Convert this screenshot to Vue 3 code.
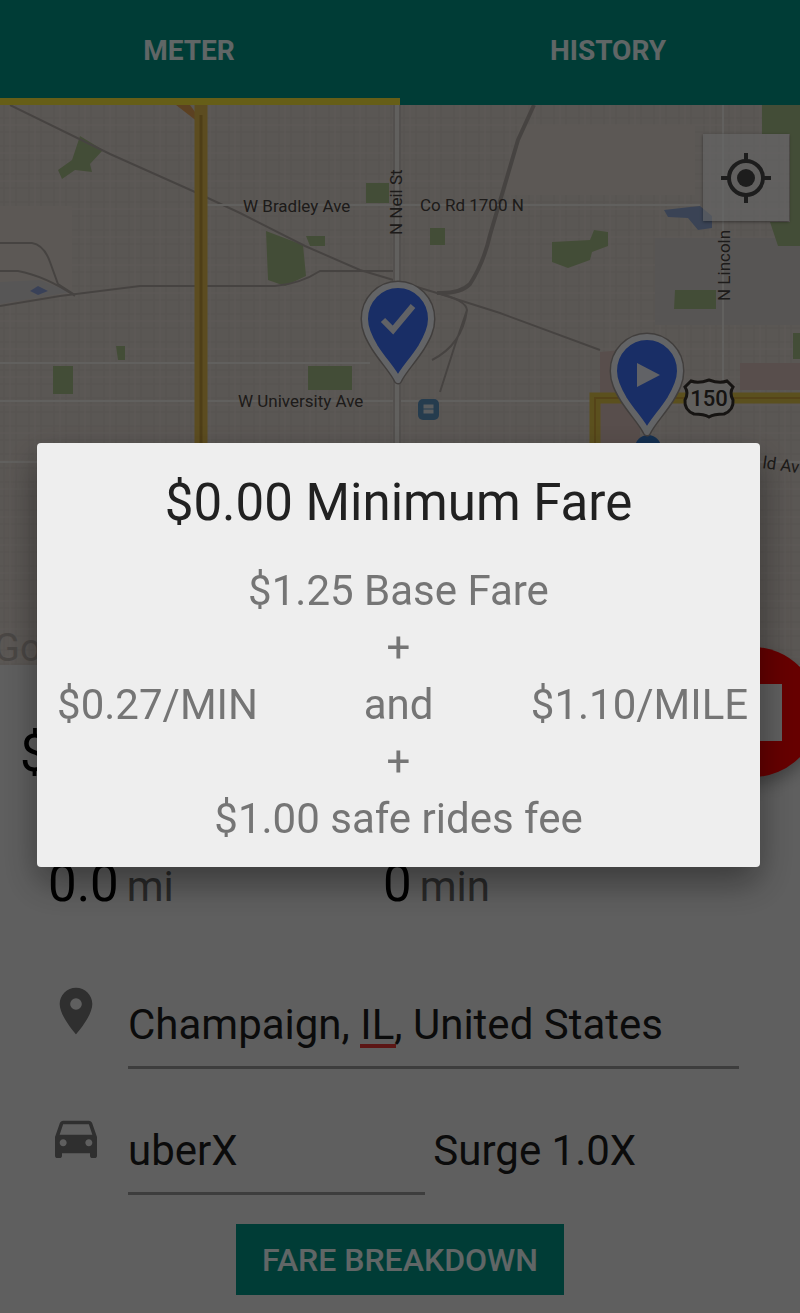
<template>
  <div class="page">
    <header class="tabs" role="tablist">
      <button
        v-for="tab in tabs"
        :key="tab"
        class="tab"
        :class="{ active: tab === activeTab }"
        role="tab"
        :aria-selected="tab === activeTab"
        @click="activeTab = tab"
      >{{ tab }}</button>
    </header>

    <section class="map">
      <svg class="map-canvas" viewBox="0 105 800 560" preserveAspectRatio="xMidYMid slice">
        <defs>
          <pattern id="blocks" width="25" height="28" patternUnits="userSpaceOnUse">
            <path d="M4 0V28M16 0V28M0 6H25M0 20H25" stroke="#d8d0c9" stroke-width="1" fill="none" />
            <path d="M10 0V28M0 13H25" stroke="#e8e0d9" stroke-width="1" fill="none" />
          </pattern>
        </defs>
        <rect y="105" width="800" height="560" fill="#e2d9d2" />
        <rect y="105" width="800" height="560" fill="url(#blocks)" />

        <!-- 空地 -->
        <path d="M0 206H72V290H0Z M520 125H695V195H505Z" fill="#e5ddd4" />
        <path d="M655 238H800V325H655Z" fill="#d9d5d2" />
        <path d="M740 363H800V390H740Z M600 352L622 350V400H600Z M600 402H640V443H600Z" fill="#dcc3bd" />
        <path d="M0 282L40 280L70 292L0 304Z" fill="#dad6d8" />

        <!-- 公园 -->
        <g fill="#a9c08a">
          <path d="M80 136L103 150L90 164L92 172L75 170L62 179L58 170L72 160Z" />
          <path d="M266 231L303 245L306 276L285 286L268 280Z" />
          <path d="M308 366H352V390H308Z M53 366H73V394H53Z" />
          <path d="M552 242L590 240L594 230L608 232V246L592 252L590 260L568 268L552 262Z" />
          <path d="M675 290H716V309H674Z M366 183H389V203H366Z M430 228H445V245H430Z" />
          <path d="M762 105H800V246H778L770 222H790V134H762Z M793 333H800V359H793Z" />
          <path d="M306 236H325V246H310Z M116 346H125V360H118Z" />
        </g>
        <path d="M664 210L690 207L700 206L712 216V228L698 230L688 218L668 217Z" fill="#91a8d4" />
        <path d="M30 291L38 286L48 291L38 295Z" fill="#8fa4dc" />

        <!-- 铁路 -->
        <g fill="none" stroke="#b0a8a3" stroke-width="2">
          <path d="M10 105L110 154L195 192L240 213L305 246L360 270L437 293L500 313L600 350" />
          <path d="M0 243H32Q44 245 50 262L58 284L75 295" />
          <path d="M0 271H18Q45 276 75 296M0 306L60 296L140 286H275Q300 284 320 271H395" />
          <path d="M437 293Q466 300 467 310L455 345L440 392M467 310Q462 345 432 360" />
          <path d="M534 105L518 140L490 235Q484 262 470 284Q460 294 437 293" stroke-width="4" />
        </g>

        <!-- 道路 -->
        <g fill="none" stroke="#f3efea" stroke-width="2">
          <path d="M200 205H700M0 401H680M0 363H370M0 462H800M723 105V390" />
          <path d="M397 105V445" stroke="#cfc8c2" stroke-width="8" />
          <path d="M397 105V445" stroke-width="4" />
        </g>
        <path d="M176 105H190L198 116V122Z" fill="#e5a455" />
        <path d="M201 105V450" stroke="#e6bf50" stroke-width="13" />
        <path d="M201 115V450" stroke="#c39b3b" stroke-width="3" />
        <path d="M595 450V398H800" fill="none" stroke="#e3c74c" stroke-width="11" />
        <path d="M595 450V398H800" fill="none" stroke="#d3a93c" stroke-width="2" />

        <g class="map-label">
          <text x="243" y="212">W Bradley Ave</text>
          <text x="420" y="211">Co Rd 1700 N</text>
          <text x="238" y="407">W University Ave</text>
          <text transform="translate(402 235) rotate(-90)">N Neil St</text>
          <text transform="translate(730 301) rotate(-90)">N Lincoln</text>
          <text transform="translate(762 468) rotate(8)">ld Av</text>
          <text class="watermark" x="-6" y="661">Google</text>
        </g>

        <!-- 车站 -->
        <rect x="418" y="399" width="21" height="21" rx="5" fill="#5d96c4" />
        <path d="M423 404H434V414H423Z M423 409H434" fill="#dfe6ea" stroke="#5d96c4" stroke-width="1" />

        <!-- 150 号公路标志 -->
        <path
          d="M691 381Q698 384 709 380Q720 384 727 381L733 387Q729 393 733 400Q734 410 724 414Q714 414 709 417Q704 414 694 414Q684 410 685 400Q689 393 685 387Z"
          fill="#f3f0ec" stroke="#38332f" stroke-width="3"
        />
        <text class="shield" x="709" y="406" text-anchor="middle">150</text>

        <circle cx="648" cy="448" r="13" fill="#3477c9" />
        <g v-for="pin in pins" :key="pin.id" :transform="`translate(${pin.x} ${pin.y})`">
          <path :d="pinShape" fill="none" stroke="#a39c98" stroke-width="9" stroke-linejoin="round" />
          <path :d="pinShape" fill="#3f74ff" stroke="#f8fbff" stroke-width="6" stroke-linejoin="round" />
          <path v-if="pin.id === 'end'" d="M-15 1L-5 11L15 -13" fill="none" stroke="#f2f5ff" stroke-width="6" />
          <path v-else d="M-10 -8L13 4L-10 16Z" fill="#f2f5ff" />
        </g>
      </svg>
      <button class="locate" aria-label="My location">
        <svg viewBox="0 0 50 50" width="50" height="50">
          <circle cx="25" cy="25" r="17" fill="none" stroke="#4a4a4a" stroke-width="4" />
          <circle cx="25" cy="25" r="9" fill="#4a4a4a" />
          <path d="M25 0V8M25 42V50M0 25H8M42 25H50" stroke="#4a4a4a" stroke-width="4" />
        </svg>
      </button>
    </section>

    <main class="panel">
      <button class="stop" aria-label="Stop"><span class="stop-square"></span></button>
      <div class="total">$0.00</div>
      <div class="stats">
        <div class="stat">0.0 <span class="unit">mi</span></div>
        <div class="stat">0 <span class="unit">min</span></div>
      </div>

      <div class="fields">
        <div class="field">
          <label for="location" aria-label="Location">
            <svg class="icon" viewBox="0 0 24 24">
              <path d="M12 2C8.13 2 5 5.13 5 9c0 5.25 7 13 7 13s7-7.75 7-13c0-3.87-3.13-7-7-7zm0 9.5a2.5 2.5 0 0 1 0-5 2.5 2.5 0 0 1 0 5z" />
            </svg>
          </label>
          <div class="control">
            <input id="location" v-model="location" type="text" spellcheck="false" />
            <span class="spell-mark"></span>
          </div>
        </div>
        <div class="field">
          <label for="service" aria-label="Service">
            <svg class="icon" viewBox="0 0 24 24">
              <path d="M18.92 6.01C18.72 5.42 18.16 5 17.5 5h-11c-.66 0-1.21.42-1.42 1.01L3 12v8c0 .55.45 1 1 1h1c.55 0 1-.45 1-1v-1h12v1c0 .55.45 1 1 1h1c.55 0 1-.45 1-1v-8l-2.08-5.99zM6.5 16c-.83 0-1.5-.67-1.5-1.5S5.67 13 6.5 13s1.5.67 1.5 1.5S7.33 16 6.5 16zm11 0c-.83 0-1.5-.67-1.5-1.5s.67-1.5 1.5-1.5 1.5.67 1.5 1.5-.67 1.5-1.5 1.5zM5 11l1.5-4.5h11L19 11H5z" />
            </svg>
          </label>
          <div class="control service">
            <select id="service" v-model="service">
              <option>uberX</option>
            </select>
            <span class="surge">Surge 1.0X</span>
          </div>
        </div>
      </div>

      <button class="breakdown" @click="showFare = true">FARE BREAKDOWN</button>
    </main>

    <div v-if="showFare" class="scrim" @click.self="showFare = false">
      <div class="dialog" role="dialog" aria-labelledby="fare-title">
        <h2 id="fare-title">$0.00 Minimum Fare</h2>
        <p>$1.25 Base Fare</p>
        <p>+</p>
        <div class="rates">
          <span>$0.27/MIN</span>
          <span>and</span>
          <span>$1.10/MILE</span>
        </div>
        <p>+</p>
        <p>$1.00 safe rides fee</p>
      </div>
    </div>
  </div>
</template>

<script setup>
import { ref } from 'vue'

const tabs = ['METER', 'HISTORY']
const activeTab = ref('METER')
const location = ref('Champaign, IL, United States')
const service = ref('uberX')
const showFare = ref(true)

// 起点和终点标记
const pinShape = 'M0 61C-4 52 -14 42 -23 28C-29 18 -33 10 -33 0A33 34 0 0 1 33 0C33 10 29 18 23 28C14 42 4 52 0 61Z'
const pins = [
  { id: 'end', x: 398, y: 319 },
  { id: 'start', x: 647, y: 371 }
]
</script>

<style>
body {
  margin: 0;
  background: #eeeeee;
}
</style>

<style scoped>
.page {
  min-height: 100vh;
  overflow: hidden;
  background: #eeeeee;
  color: #1c1c1c;
  font-family: Roboto, sans-serif;
  font-size: 42px;
}

button,
input,
select {
  margin: 0;
  padding: 0;
  border: 0;
  border-radius: 0;
  background: none;
  color: inherit;
  font: inherit;
}

.tabs {
  display: flex;
  height: 105px;
  background: #009688;
}

.tab {
  box-sizing: border-box;
  width: 50%;
  padding: 2px 0 0 16px;
  border-bottom: 7px solid transparent;
  color: #f0ffff;
  font-size: 28px;
  font-weight: 700;
}

.tab:first-child {
  padding: 2px 22px 0 0;
}

.tab.active {
  border-bottom-color: #ffeb3b;
}

.map {
  position: relative;
}

.map-canvas {
  display: block;
  width: 100%;
  height: 560px;
}

.map-label {
  fill: #4a4541;
  font-size: 17px;
}

.watermark {
  fill: #b8b0aa;
  font-size: 38px;
}

.shield {
  fill: #38332f;
  font-size: 22px;
  font-weight: 500;
}

.locate {
  position: absolute;
  top: 29px;
  right: 11px;
  display: flex;
  align-items: center;
  justify-content: center;
  width: 86px;
  height: 87px;
  background: rgba(255, 255, 255, 0.6);
  box-shadow: 0 1px 3px rgba(0, 0, 0, 0.4);
}

.panel {
  position: relative;
  display: flex;
  flex-direction: column;
  padding: 57px 0 18px;
}

.stop {
  position: absolute;
  top: -18px;
  right: -18px;
  display: flex;
  align-items: center;
  justify-content: center;
  width: 130px;
  height: 130px;
  border-radius: 50%;
  background: #ff0000;
  box-shadow: 0 8px 16px rgba(0, 0, 0, 0.3);
}

.stop-square {
  width: 57px;
  height: 57px;
  background: #eeeeee;
}

.total {
  padding-left: 20px;
  color: #000000;
  font-size: 51px;
  line-height: 64px;
}

.stats {
  display: grid;
  grid-template-columns: 1fr 1fr;
  margin-top: 66px;
  padding: 0 82px 0 48px;
  color: #000000;
  font-size: 51px;
  line-height: 64px;
}

.stat {
  display: flex;
  align-items: baseline;
  gap: 8px;
}

.unit {
  color: #666666;
  font-size: 42px;
  line-height: 48px;
}

.fields {
  display: flex;
  flex-direction: column;
  gap: 40px;
  margin-top: 67px;
  padding: 0 61px 0 48px;
}

.field {
  display: flex;
  gap: 24px;
}

.icon {
  display: block;
  width: 56px;
  height: 56px;
  fill: #757575;
}

.control {
  position: relative;
  flex: 1;
  min-width: 0;
}

.control input,
.control select {
  display: block;
  box-sizing: border-box;
  width: 100%;
  height: 86px;
  border-bottom: 3px solid #999999;
  outline: none;
  appearance: none;
}

.spell-mark {
  position: absolute;
  top: 61px;
  left: 232px;
  width: 36px;
  height: 4px;
  background: #e53935;
}

.service {
  display: grid;
  grid-template-columns: 36fr 37fr;
  gap: 8px;
}

.surge {
  line-height: 83px;
}

.breakdown {
  align-self: center;
  height: 71px;
  margin-top: 29px;
  padding: 0 26px;
  background: #009688;
  color: #f0ffff;
  font-size: 32px;
  font-weight: 500;
}

.scrim {
  position: fixed;
  inset: 0;
  display: flex;
  align-items: center;
  padding: 0 40px 3px 37px;
  background: rgba(0, 0, 0, 0.6);
}

.dialog {
  flex: 1;
  padding: 24px 0 20px;
  border-radius: 4px;
  background: #eeeeee;
  box-shadow: 0 16px 36px rgba(0, 0, 0, 0.4);
  color: #757575;
  line-height: 57px;
  text-align: center;
}

.dialog h2 {
  margin: 0 0 23px;
  color: #212121;
  font-size: 51px;
  font-weight: 400;
  line-height: 72px;
}

.dialog p {
  margin: 0;
}

.rates {
  display: grid;
  grid-template-columns: repeat(3, 1fr);
}
</style>
